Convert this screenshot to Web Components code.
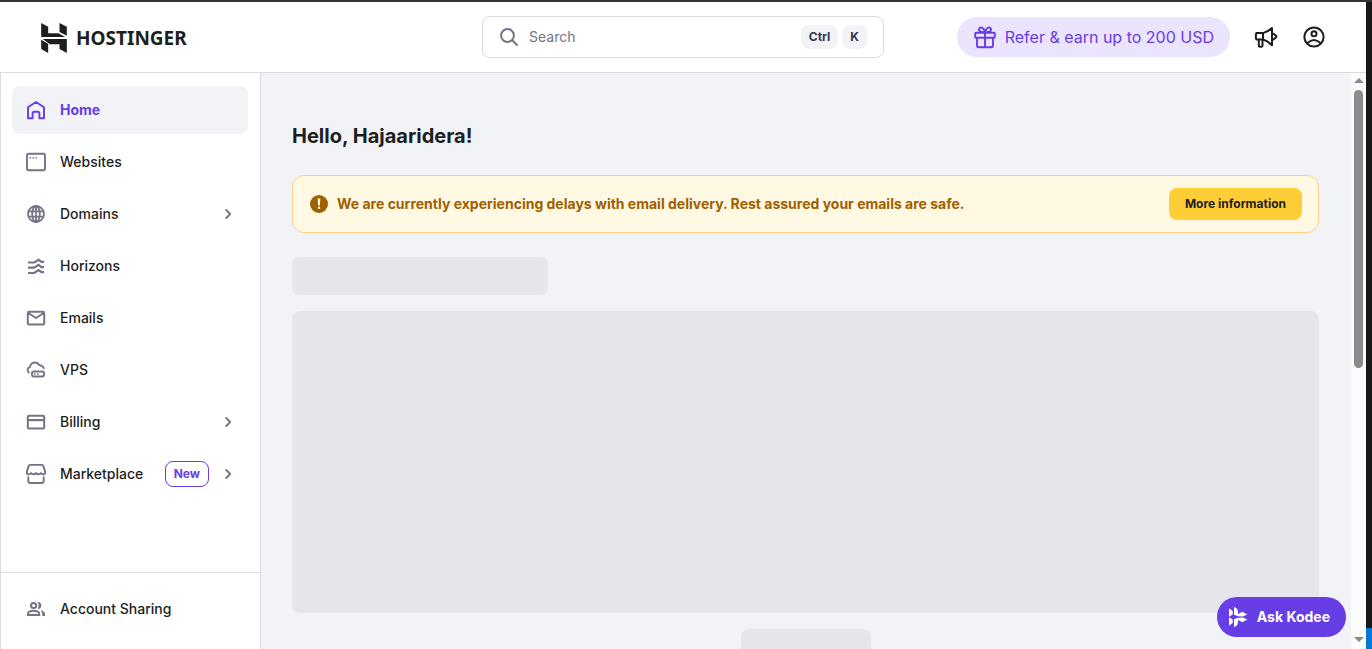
<!DOCTYPE html>
<html lang="en">
<head>
<meta charset="utf-8">
<title>Hostinger hPanel</title>
<style>
  html, body { margin: 0; height: 100%; }
  body {
    font-family: Inter, "Noto Sans", sans-serif;
    font-size: 14px;
    line-height: 24px;
    color: #1d1e20;
    overflow: hidden;
    --primary: #673de6;
    --primary-light: #ebe4ff;
    --gray: #727586;
    --border: #dadce0;
    --surface: #f2f3f7;
    --skeleton: #e5e6eb;
  }
</style>
</head>
<body>
<hp-app></hp-app>
<script>
const define = (name, html, setup) => {
  const template = document.createElement('template');
  template.innerHTML = html;
  customElements.define(name, class extends HTMLElement {
    connectedCallback() {
      if (this.shadowRoot) return;
      const root = this.attachShadow({ mode: 'open' });
      root.append(template.content.cloneNode(true));
      if (setup) setup(this, root);
    }
  });
};

const line = (d, w = 1.9) => `<path d="${d}" fill="none" stroke="currentColor" stroke-width="${w}" stroke-linejoin="round" stroke-linecap="round"/>`;
const icons = {
  home: line('M4 9.300 12 4l8 5.300v10.900h-4.600v-4.700q0-1.700-1.700-1.700h-3.400q-1.700 0-1.700 1.700v4.700H4z', 1.900),
  websites: line('M4.600 3.800h14.800q1.600 0 1.600 1.600v13.200q0 1.600-1.600 1.600H4.600q-1.600 0-1.600-1.600V5.400q0-1.600 1.600-1.600z', 1.900) + '<path d="M5.500 7H7v1.500H5.500zM8.500 7H10v1.500H8.500zM11.500 7H13v1.500h-1.500z" fill="currentColor"/>',
  domains: '<g fill="none" stroke="currentColor" stroke-width="1.800"><circle cx="12" cy="12" r="8"/><ellipse cx="12" cy="12" rx="3.800" ry="8"/><path d="M12 4v16M4.500 9.300h15M4.500 14.700h15"/></g>',
  horizons: '<g fill="none" stroke="currentColor" stroke-width="2.200"><path d="M4 8.500h6.300l4.200-2.700 3 2H20M4 13.600h6.300l4.200-2.700 3 2.200H20M4 19h6.300l4.200-3 3 2.200H20"/></g>',
  emails: line('M5.200 5.800h13.600q1.400 0 1.400 1.400v10q0 1.400-1.400 1.400H5.200q-1.400 0-1.400-1.400v-10q0-1.400 1.400-1.400zM4.400 7l7.600 5L19.600 7', 2),
  vps: line('M4.700 14.500C2.800 12.800 3.500 9.500 6 9c.4-3.400 3.200-5 6.200-4.300 1.500.3 2.600 1.300 3.300 2.500 2.200 0 3.500 1.300 4.200 3M9.700 13.500h8.600q1.700 0 1.700 1.700v1.600q0 1.700-1.700 1.700H9.700q-1.700 0-1.700-1.700v-1.600q0-1.700 1.700-1.700z') + '<path d="M10 15.200h1.600v1.600H10zM13 15.200h1.600v1.600H13z" fill="currentColor"/>',
  billing: line('M5.200 5.800h13.600q1.400 0 1.400 1.400v10q0 1.400-1.400 1.400H5.200q-1.400 0-1.400-1.400v-10q0-1.400 1.400-1.400z', 2) + '<path d="M4 9h16v2.200H4z" fill="currentColor"/>',
  marketplace: line('M6 2.900h12q1 0 1.300 1l1.900 6q0 2.400-2.200 2.400-1.700 0-2.300-1.200-.6 1.200-2.300 1.200-1.600 0-2.400-1.200-.8 1.200-2.400 1.200-1.700 0-2.300-1.200-.6 1.200-2.300 1.200-2.200 0-2.200-2.400l1.900-6q.3-1 1.500-1zM4.300 15.300v3.700q0 2 2 2h11.400q2 0 2-2v-3.700'),
  sharing: '<g fill="none" stroke="currentColor" stroke-width="2"><circle cx="9.600" cy="8.500" r="2.600"/><path d="M4 18v-1.300q0-1.300 1.400-2 4.200-1.900 8.400 0 1.400.7 1.400 2V18z"/></g><path d="M13.600 5c5-.6 5 7.400 0 7 1.400-2 1.400-5 0-7zM16.500 13.200q4.500 1 4.500 3.800v2h-2.700v-2.300q0-2-1.800-3.500z" fill="currentColor"/>',
  chevron: line('m10.200 8 4 4-4 4', 1.800),
  search: '<g fill="none" stroke="currentColor" stroke-width="2"><circle cx="10.500" cy="10.500" r="6.400"/><path d="m15.200 15.200 5.300 5.300"/></g>',
  gift: line('M3 7.800h18q.8 0 .8.800v3.400q0 .8-.8.800H3q-.8 0-.8-.8V8.600q0-.8.8-.8zM4 12.800v7.400q0 2 2 2h12q2 0 2-2v-7.400M12 7.800v14.400M12 7.800C10.500 6.800 6 8 6 4.600c0-3.400 5-3 6 3.200 1-6.200 6-6.600 6-3.200 0 3.400-4.500 2.200-6 3.200'),
  megaphone: line('M2.300 8.100H9v6.400H2.300q-1-3.200 0-6.400zM9 8.100q4.800-1.300 9-5v17.200q-4.200-4.500-9-5.800M4.800 14.500v6.300q0 1 1 1h1.700q1 0 1-1v-6.300M18 8.700h1.500l2.800 2.400v1l-2.800 2.400H18', 2),
  user: '<g fill="none" stroke="currentColor" stroke-width="2"><circle cx="12" cy="12" r="9.600"/><circle cx="12" cy="8.800" r="2.500"/><path d="M5.200 18.200q6.800-6.400 13.600 0"/></g>',
  alert: '<circle cx="12" cy="12" r="10.800" fill="currentColor"/><path d="M10.400 5.500h3.200l-.5 8.300h-2.200zM10.700 15.400h2.600v2.600h-2.600z" fill="#fff8e2"/>',
  kodee: '<path fill="currentColor" d="M4 3.300l3.700 2.600v3.600L4 11.700zM4 20.700l3.700-2.600v-3.600L4 12.300zM9 1.700l3.400 2.200.8 5L9 6.200zM9 22.300l3.400-2.200.8-5L9 17.800zM13 9.300l4.300-2.500 5 2.700-4.500 2-4.800-.3zM13 14.700l4.300 2.500 5-2.700-4.500-2-4.800.3zM9 6.200l4.600 2.900-.6 2.100-4-1.400zM9 17.800l4.600-2.900-.6-2.100-4 1.400z"/>'
};

define('hp-icon', `
  <style>
    :host { display: block; flex: none; width: var(--size, 24px); height: var(--size, 24px); }
    svg { display: block; width: 100%; height: 100%; }
  </style>
  <svg viewBox="0 0 24 24" aria-hidden="true"></svg>`,
  (el, root) => { root.querySelector('svg').innerHTML = icons[el.getAttribute('name')]; });

define('hp-logo', `
  <style>
    :host { display: flex; }
    a { display: flex; align-items: center; gap: 9px; padding-top: 2px; color: #1d1e20; text-decoration: none;
        font: 700 19px/32px "Noto Sans", sans-serif; }
    svg { width: 27px; height: 30px; }
  </style>
  <a href="#">
    <svg viewBox="120 66 80 90" aria-hidden="true">
      <path fill="currentColor" d="M123 66l21 11v20h31l20 11h-72zM178 66l22 11v27l-22-11zM128 114h72v42l-22-12v-14h-29zM123 116l21 12v28l-21-12z"/>
    </svg>
    <span>HOSTINGER</span>
  </a>`);

define('hp-search', `
  <style>
    :host { display: block; }
    label { box-sizing: border-box; display: flex; align-items: center; height: 42px; padding: 0 16px 0 14px;
      border: 1px solid var(--border); border-radius: 8px; background: #fff; color: var(--gray); }
    input { flex: 1; min-width: 0; margin: 0 0 0 8px; padding: 0; border: 0; outline: 0; background: none;
      font: inherit; color: #1d1e20; }
    input::placeholder { color: var(--gray); opacity: 1; }
    kbd { margin-left: 4px; padding: 0 8px; border-radius: 8px; background: var(--surface);
      font: 700 12px/24px Inter, sans-serif; color: #36344d; }
  </style>
  <label><hp-icon name="search"></hp-icon><input type="text" placeholder="Search" aria-label="Search"><kbd>Ctrl</kbd><kbd>K</kbd></label>`);

define('hp-header', `
  <style>
    :host { display: block; }
    header { display: grid; grid-template-columns: 1fr minmax(200px, 402px) 1fr; align-items: center;
      height: 70px; padding: 0 40px; background: #fff; border-bottom: 1px solid var(--border); }
    .actions { display: flex; align-items: center; justify-content: flex-end; gap: 24px; }
    button { display: block; margin: 0; padding: 0; border: 0; background: none; color: #1d1e20; cursor: pointer; }
    .refer { display: flex; align-items: center; gap: 8px; height: 40px; padding: 0 16px; border-radius: 20px;
      background: var(--primary-light); color: var(--primary); font-size: 16px; text-decoration: none; white-space: nowrap; }
  </style>
  <header>
    <hp-logo></hp-logo>
    <hp-search></hp-search>
    <div class="actions">
      <a class="refer" href="#"><hp-icon name="gift"></hp-icon><span>Refer &amp; earn up to 200 USD</span></a>
      <button aria-label="News"><hp-icon name="megaphone"></hp-icon></button>
      <button aria-label="Account"><hp-icon name="user"></hp-icon></button>
    </div>
  </header>`);

define('hp-nav-item', `
  <style>
    :host { display: block; }
    a { display: flex; align-items: center; height: 48px; padding: 0 8px 0 12px; border-radius: 8px;
      color: #1d1e20; font-weight: 500; text-decoration: none; }
    hp-icon { color: var(--gray); }
    .label { flex: 1; margin-left: 12px; }
    .chevron { margin-left: 7px; }
    :host([active]) a { background: var(--surface); color: var(--primary); font-weight: 700; }
    :host([active]) hp-icon { color: inherit; }
  </style>
  <a href="#"><span class="label"><slot></slot></span><slot name="badge"></slot></a>`,
  (el, root) => {
    const a = root.querySelector('a');
    const icon = (name, cls) => {
      const node = document.createElement('hp-icon');
      node.setAttribute('name', name);
      node.className = cls;
      return node;
    };
    a.prepend(icon(el.getAttribute('icon'), 'lead'));
    if (el.hasAttribute('expandable')) a.append(icon('chevron', 'chevron'));
  });

define('hp-badge', `
  <style>
    :host { display: block; padding: 0 8px; border: 1px solid var(--primary); border-radius: 8px;
      color: var(--primary); font-size: 12px; font-weight: 700; line-height: 24px; }
  </style>
  <slot></slot>`);

define('hp-sidebar', `
  <style>
    :host { display: flex; flex-direction: column; box-sizing: border-box; min-height: 0; background: #fff;
      border: solid var(--border); border-width: 0 1px; }
    nav { display: flex; flex-direction: column; gap: 4px; flex: 1; min-height: 0; padding: 13px 12px 0 11px; overflow: hidden; }
    footer { padding: 12px 12px 16px 11px; border-top: 1px solid var(--border); }
  </style>
  <nav>
    <hp-nav-item icon="home" active>Home</hp-nav-item>
    <hp-nav-item icon="websites">Websites</hp-nav-item>
    <hp-nav-item icon="domains" expandable>Domains</hp-nav-item>
    <hp-nav-item icon="horizons">Horizons</hp-nav-item>
    <hp-nav-item icon="emails">Emails</hp-nav-item>
    <hp-nav-item icon="vps">VPS</hp-nav-item>
    <hp-nav-item icon="billing" expandable>Billing</hp-nav-item>
    <hp-nav-item icon="marketplace" expandable>Marketplace<hp-badge slot="badge">New</hp-badge></hp-nav-item>
  </nav>
  <footer><hp-nav-item icon="sharing">Account Sharing</hp-nav-item></footer>`);

define('hp-banner', `
  <style>
    :host { display: flex; align-items: center; gap: 8px; padding: 12px 16px; border: 1px solid #fed18a;
      border-radius: 12px; background: #fff8e2; color: #9f6000; font-weight: 700; }
    hp-icon { --size: 20px; }
    p { flex: 1; margin: 0; }
    button { height: 32px; margin: 0; padding: 0 16px; border: 0; border-radius: 8px; background: #ffcd35;
      color: #1d1e20; font: 700 12px/24px Inter, sans-serif; cursor: pointer; }
  </style>
  <hp-icon name="alert"></hp-icon><p><slot></slot></p><button>More information</button>`);

define('hp-skeleton', `
  <style>:host { display: block; flex: none; border-radius: 8px; background: var(--skeleton); }</style>`);

define('hp-home', `
  <style>
    :host { display: block; min-height: 0; overflow: hidden; background: var(--surface); }
    main { display: flex; flex-direction: column; padding: 47px 32px 32px 31px; }
    h1 { margin: 0 0 23px; font-size: 20px; line-height: 32px; font-weight: 700; }
    .title { width: 256px; height: 38px; margin: 24px 0 16px; }
    .card { height: 302px; margin-bottom: 16px; }
    .more { width: 130px; height: 40px; align-self: center; }
  </style>
  <main>
    <h1>Hello, Hajaaridera!</h1>
    <hp-banner>We are currently experiencing delays with email delivery. Rest assured your emails are safe.</hp-banner>
    <hp-skeleton class="title"></hp-skeleton>
    <hp-skeleton class="card"></hp-skeleton>
    <hp-skeleton class="more"></hp-skeleton>
  </main>`);

define('hp-scrollbar', `
  <style>
    :host { display: flex; flex-direction: column; align-items: center; justify-content: space-between;
      box-sizing: border-box; padding: 5px 0 7px; background: #fcfcfc; }
    i { border: 5px solid transparent; }
    .up { border-top: 0; border-bottom-color: #8b8b8b; }
    .down { border-bottom: 0; border-top-color: #8b8b8b; }
    .track { flex: 1; margin: 7px 0 6px; }
    .thumb { width: 9px; height: 278px; border-radius: 5px; background: #8b8b8b; }
  </style>
  <i class="up"></i><div class="track"><div class="thumb"></div></div><i class="down"></i>`);

define('hp-chat-button', `
  <style>
    :host { position: absolute; right: 20px; bottom: 12px; }
    button { display: flex; align-items: center; gap: 8px; height: 40px; margin: 0; padding: 0 16px 0 8px; border: 0;
      border-radius: 20px; background: var(--primary); color: #fff; font: 700 14px/24px Inter, sans-serif; cursor: pointer; }
  </style>
  <button><hp-icon name="kodee"></hp-icon><slot></slot></button>`);

define('hp-app', `
  <style>
    :host { display: grid; grid-template-columns: 1fr 6px; box-sizing: border-box; height: 100vh;
      border-top: 2px solid #343238; background: #181818; }
    .window { position: relative; display: grid; grid-template-columns: 261px 1fr 15px; grid-template-rows: auto 1fr;
      min-height: 0; background: #fff; }
    hp-header { grid-column: 1 / -1; }
    .edge { display: flex; flex-direction: column; justify-content: flex-end; }
    .edge div { height: 21px; background: #0078d7; }
  </style>
  <div class="window">
    <hp-header></hp-header>
    <hp-sidebar></hp-sidebar>
    <hp-home></hp-home>
    <hp-scrollbar></hp-scrollbar>
    <hp-chat-button>Ask Kodee</hp-chat-button>
  </div>
  <div class="edge"><div></div></div>`);
</script>
</body>
</html>
